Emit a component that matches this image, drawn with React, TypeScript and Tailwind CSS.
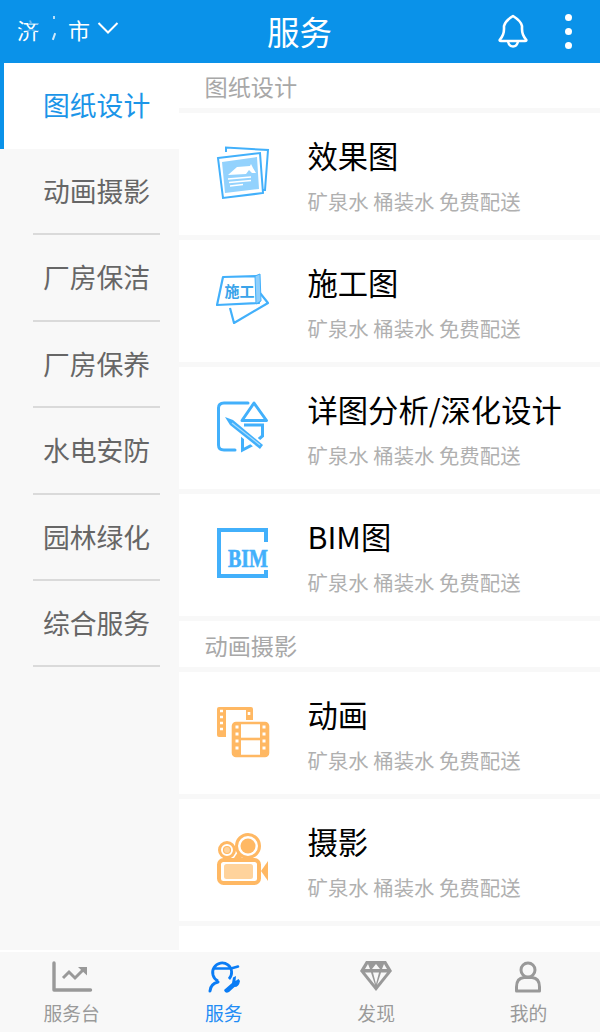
import React from 'react';

const BLUE = '#42b0fb';
const ORANGE = '#ffb863';

const IconEffect = () => (
  <svg width="54" height="54" viewBox="0 0 54 54" className="block">
    <path d="M10 6 L10 1.5 L52 4 L49 44 L46 44" fill="none" stroke={BLUE} strokeWidth="2" />
    <path d="M2 12 L44 7 L47 47 L7 52 Z" fill="#fff" stroke={BLUE} strokeWidth="2" strokeLinejoin="miter" />
    <path d="M6 16 L41 11 L43 43 L9 47 Z" fill="#93d2fd" />
    <path d="M12 29 L21 21 L34 20 L35 18 L37 22 L40 27 L36 27 L33 24 L30 28 Z" fill="#fff" />
    <path d="M12 33 L35 31 M13 36.5 L35 34.5 M14 40 L27 38.5" stroke="#fff" strokeWidth="1.4" />
  </svg>
);

const IconConstruction = () => (
  <svg width="54" height="54" viewBox="0 0 54 54" className="block">
    <path d="M14 35 L18 50 L52 30 L44 20" fill="#fff" stroke={BLUE} strokeWidth="2.2" strokeLinejoin="round" />
    <path d="M7 4 L41 3 L43 30 L1 32 Z" fill="#fff" stroke={BLUE} strokeWidth="2.2" strokeLinejoin="round" />
    <path d="M39 3 L44 1 L45 28 L40 31 Z" fill="#8fcffc" stroke={BLUE} strokeWidth="1" />
    <text x="8.5" y="24" fontSize="15" fontWeight="700" fill="#3aa4ea" fontFamily="'Noto Sans CJK SC', sans-serif">施工</text>
  </svg>
);

const IconDeepen = () => (
  <svg width="54" height="54" viewBox="0 0 54 54" className="block">
    <path d="M32 3 H8 Q2.5 3 2.5 8 V45 Q2.5 50 8 50 H19" fill="none" stroke={BLUE} strokeWidth="3" strokeLinecap="round" />
    <path d="M38 3 L50.5 20.5 L26 20.5 Z" fill="none" stroke={BLUE} strokeWidth="3" strokeLinejoin="round" />
    <path d="M28 25 H46.5 V36 L36 45 L26.5 50 V34" fill="none" stroke={BLUE} strokeWidth="3" />
    <path d="M8 17 L17 20 L48 45 L44 50 L14 26 Z" fill="#fff" stroke="#fff" strokeWidth="3" />
    <path d="M9 17 L17 20 L47 45 L44 49 L14 25 Z" fill={BLUE} />
    <path d="M16 23 L44 45" stroke="#a9dcfd" strokeWidth="1.2" />
  </svg>
);

const IconBim = () => (
  <svg width="54" height="54" viewBox="0 0 54 54" className="block overflow-visible">
    <path d="M50 15 V3 H3 V49 H50 V43" fill="none" stroke={BLUE} strokeWidth="4" />
    <text x="12" y="40" fontSize="25" fontWeight="700" fill={BLUE} stroke={BLUE} strokeWidth="0.6" fontFamily="'Liberation Serif', serif" textLength="40" lengthAdjust="spacingAndGlyphs">BIM</text>
  </svg>
);

const IconFilm = () => (
  <svg width="54" height="54" viewBox="0 0 54 54" className="block">
    <path d="M3 2 H35 Q37 2 37 4 V15 H30 V5 H10 V32 H3 Q1 32 1 30 V4 Q1 2 3 2 Z" fill={ORANGE} />
    <path d="M4 6 H7 M4 12 H7 M4 18 H7 M4 24 H7 M33 7 V10" stroke="#fff" strokeWidth="2.6" />
    <rect x="17" y="18" width="35" height="33" rx="3" fill="#fff" stroke={ORANGE} strokeWidth="2.6" />
    <rect x="17" y="18" width="8" height="33" fill={ORANGE} />
    <rect x="44" y="18" width="8" height="33" fill={ORANGE} />
    <path d="M25 34 H44" stroke={ORANGE} strokeWidth="2.6" />
    <path d="M19.5 22 H22.5 M19.5 29 H22.5 M19.5 36 H22.5 M19.5 43 H22.5 M46.5 22 H49.5 M46.5 29 H49.5 M46.5 36 H49.5 M46.5 43 H49.5" stroke="#fff" strokeWidth="3" />
  </svg>
);

const IconCamera = () => (
  <svg width="54" height="54" viewBox="0 0 54 54" className="block">
    <circle cx="11" cy="18" r="7.5" fill="#fff" stroke={ORANGE} strokeWidth="3" />
    <circle cx="11" cy="18" r="3.5" fill="#ffd39c" stroke={ORANGE} strokeWidth="1.2" />
    <circle cx="32" cy="14" r="11.5" fill="#fff" stroke={ORANGE} strokeWidth="3" />
    <circle cx="32" cy="14" r="7.5" fill={ORANGE} />
    <path d="M18 26 L22 20 L26 26 Z" fill={ORANGE} />
    <rect x="3" y="28" width="40" height="23" rx="4.5" fill="#fff" stroke={ORANGE} strokeWidth="4" />
    <rect x="8" y="32" width="29" height="15" rx="2.5" fill="#ffd39c" />
    <path d="M45 39 L52 29 V49 Z" fill={ORANGE} />
  </svg>
);

const sideItems = ['动画摄影', '厂房保洁', '厂房保养', '水电安防', '园林绿化', '综合服务'];

const ServiceCard = ({ icon, title }: { icon: React.ReactNode; title: string }) => (
  <div className="flex h-[122px] shrink-0 bg-white">
    <div className="w-[128.5px] shrink-0 pt-[33px] pl-[37px]">{icon}</div>
    <div className="min-w-0">
      <div className="pt-[19px] text-[30.3px] leading-[46px] text-black whitespace-nowrap">{title}</div>
      <div className="pt-[8px] text-[20.4px] leading-[30px] text-[#b0b0b0] whitespace-nowrap">矿泉水 桶装水 免费配送</div>
    </div>
  </div>
);

const SectionTitle = ({ text, height }: { text: string; height: string }) => (
  <div className={`${height} shrink-0 bg-white pl-[25.5px] flex items-end pb-[5px] text-[23.2px] leading-[34px] text-[#a8a8a8]`}>{text}</div>
);

const NavItem = ({ icon, label, active }: { icon: React.ReactNode; label: string; active?: boolean }) => (
  <div className="flex w-[152.3px] shrink-0 flex-col items-center">
    <div className="h-[42px] pt-[8px]">{icon}</div>
    <div className={`pt-[5px] text-[18.8px] leading-[28px] ${active ? 'text-[#1f8cf5]' : 'text-[#9a9a9a]'}`}>{label}</div>
  </div>
);

export default function App() {
  return (
    <div className="flex h-[1032px] w-[600px] flex-col overflow-hidden bg-white font-['Noto_Sans_CJK_SC',sans-serif]">
      <header className="flex h-[63px] shrink-0 items-center bg-[#0a92e9] text-white">
        <div className="relative flex h-[63px] w-[267px] items-start pl-[17px] pt-[14px]">
          <span className="text-[22px] leading-[30px] tracking-[3.5px]">济南市</span>
          {/* the city name is partly wiped out in the picture */}
          <span className="absolute left-[42px] top-[14px] h-[30px] w-[25px] bg-[#0a92e9]" />
          <span className="absolute left-[53px] top-[33px] h-[7px] w-[2px] rotate-[20deg] bg-white opacity-80" />
          <span className="absolute left-[53px] top-[16px] h-[3px] w-[2px] bg-white opacity-70" />
          <span className="absolute left-[28px] top-[17px] h-[7px] w-[10px] bg-[#0a92e9] opacity-60" />
          <span className="absolute left-[17px] top-[29px] h-[2px] w-[21px] bg-[#0a92e9] opacity-70" />
          <svg width="22" height="12" viewBox="0 0 22 12" className="mt-[8px] ml-[3px]">
            <path d="M1.5 1 L11 10.5 L20.5 1" fill="none" stroke="#fff" strokeWidth="2" />
          </svg>
        </div>
        <div className="pb-[2px] text-[32.5px] leading-[40px]">服务</div>
        <div className="ml-auto mr-[28px] flex items-center gap-[36px]">
          <svg width="32" height="35" viewBox="0 0 32 35">
            <path d="M3 25.5 Q7 21 7 15 V12 Q8 7 16 2 Q24 7 25 12 V15 Q25 21 29 25.5 Q30 27 28 27 H4 Q2 27 3 25.5 Z" fill="none" stroke="#fff" strokeWidth="2.6" strokeLinejoin="round" />
            <path d="M11 27.5 Q12 32.5 16 32.5 Q20 32.5 21 27.5" fill="none" stroke="#fff" strokeWidth="2.4" />
          </svg>
          <div className="flex flex-col gap-[7px]">
            <span className="block size-[7px] rounded-full bg-white" />
            <span className="block size-[7px] rounded-full bg-white" />
            <span className="block size-[7px] rounded-full bg-white" />
          </div>
        </div>
      </header>

      <div className="flex min-h-0 flex-1">
        <aside className="w-[179px] shrink-0 bg-[#f8f8f8]">
          <div className="flex h-[86px] items-center border-l-4 border-[#0a92e9] bg-white pb-[2px] pl-[39px] text-[26.8px] text-[#1b95e8]">图纸设计</div>
          {sideItems.map((item) => (
            <div key={item} className="ml-[33px] mr-[19px] flex h-[86.4px] items-center justify-center border-b-2 border-[#dadada] text-[26.8px] text-[#666]">
              {item}
            </div>
          ))}
        </aside>
        <main className="flex min-w-0 flex-1 flex-col gap-[5px] overflow-hidden bg-[#f8f8f8]">
          <SectionTitle text="图纸设计" height="h-[45px]" />
          <ServiceCard icon={<IconEffect />} title="效果图" />
          <ServiceCard icon={<IconConstruction />} title="施工图" />
          <ServiceCard icon={<IconDeepen />} title="详图分析/深化设计" />
          <ServiceCard icon={<IconBim />} title="BIM图" />
          <SectionTitle text="动画摄影" height="h-[46px]" />
          <ServiceCard icon={<IconFilm />} title="动画" />
          <ServiceCard icon={<IconCamera />} title="摄影" />
          <div className="h-[30px] shrink-0 bg-white" />
        </main>
      </div>

      <nav className="flex h-[82px] shrink-0 justify-center border-t-2 border-white bg-[#f8f8f8]">
        <NavItem
          label="服务台"
          icon={
            <svg width="42" height="34" viewBox="0 0 42 34">
              <path d="M3 3 V30 H39.5" fill="none" stroke="#999" strokeWidth="3.4" strokeLinecap="round" strokeLinejoin="round" />
              <path d="M12 18 L18 12 L24 18 L34 8" fill="none" stroke="#999" strokeWidth="3" />
              <path d="M27 7 H36 V15.5 Z" fill="#999" />
            </svg>
          }
        />
        <NavItem
          active
          label="服务"
          icon={
            <svg width="34" height="34" viewBox="0 0 34 34">
              <path d="M11 21 A9.5 9.5 0 1 1 22 19" fill="none" stroke="#0a7cf5" strokeWidth="2.8" />
              <path d="M8 8.5 H24 L31 6.5" fill="none" stroke="#0a7cf5" strokeWidth="2.6" strokeLinecap="round" />
              <path d="M11 22 Q3.5 24 3 31" fill="none" stroke="#0a7cf5" strokeWidth="3" strokeLinecap="round" />
              <path d="M17 30 L25 23 L26 17.5 L29 16 L28.5 21 L31.5 19 L33 21 Q32 27 27.5 27 L22 32 Q18 34 17 30 Z" fill="#0a7cf5" />
            </svg>
          }
        />
        <NavItem
          label="发现"
          icon={
            <svg width="34" height="32" viewBox="0 0 34 32">
              <path d="M7 1 H27 L33 11 L17 31 L1 11 Z" fill="#999" />
              <path d="M9 4 L11 9 H6 Z M17 4 L21 9 H13 Z M25 4 L28 9 H23 Z" fill="#f8f8f8" />
              <path d="M6 12.5 H12 L16 25 Z M14 12.5 H20 L17 24 Z M22 12.5 H28 L18 25 Z" fill="#f8f8f8" />
            </svg>
          }
        />
        <NavItem
          label="我的"
          icon={
            <svg width="28" height="34" viewBox="0 0 28 34">
              <circle cx="14" cy="10" r="7" fill="none" stroke="#999" strokeWidth="3" />
              <path d="M2.5 31 V27 Q2.5 18 10 17.5 H18 Q25.5 18 25.5 27 V31 Z" fill="none" stroke="#999" strokeWidth="3" strokeLinejoin="round" />
            </svg>
          }
        />
      </nav>
    </div>
  );
}
